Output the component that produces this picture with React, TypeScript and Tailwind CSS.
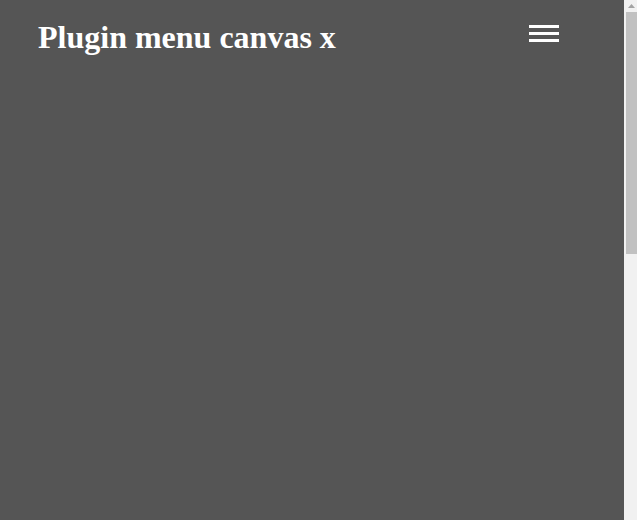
import React from "react";

export default function App() {
  return (
    <div className="flex h-[520px] overflow-hidden" style={{ fontFamily: '"Liberation Serif", "Times New Roman", serif' }}>
      <main className="flex-1 bg-[#555555]">
        <header className="flex items-start justify-between pl-[38px] pr-[65px] pt-[19px]">
          <h1 className="m-0 text-[32px] font-bold leading-[normal] text-white">Plugin menu canvas x</h1>
          <button className="mt-[6px] flex w-[30px] flex-col gap-[4px] p-0" aria-label="menu">
            <span className="block h-[3px] w-[30px] bg-white" />
            <span className="block h-[3px] w-[30px] bg-white" />
            <span className="block h-[3px] w-[30px] bg-white" />
          </button>
        </header>
      </main>
      <aside className="relative flex w-[13px] flex-col bg-[#f1f1f1]">
        <div className="flex h-[11px] items-center justify-center pl-[2px]">
          <svg width="7" height="4" viewBox="0 0 7 4">
            <polygon points="3.5,0 7,4 0,4" fill="#a3a3a3" />
          </svg>
        </div>
        <div className="ml-[2px] mt-[1px] h-[242px] bg-[#c1c1c1]" />
      </aside>
    </div>
  );
}
